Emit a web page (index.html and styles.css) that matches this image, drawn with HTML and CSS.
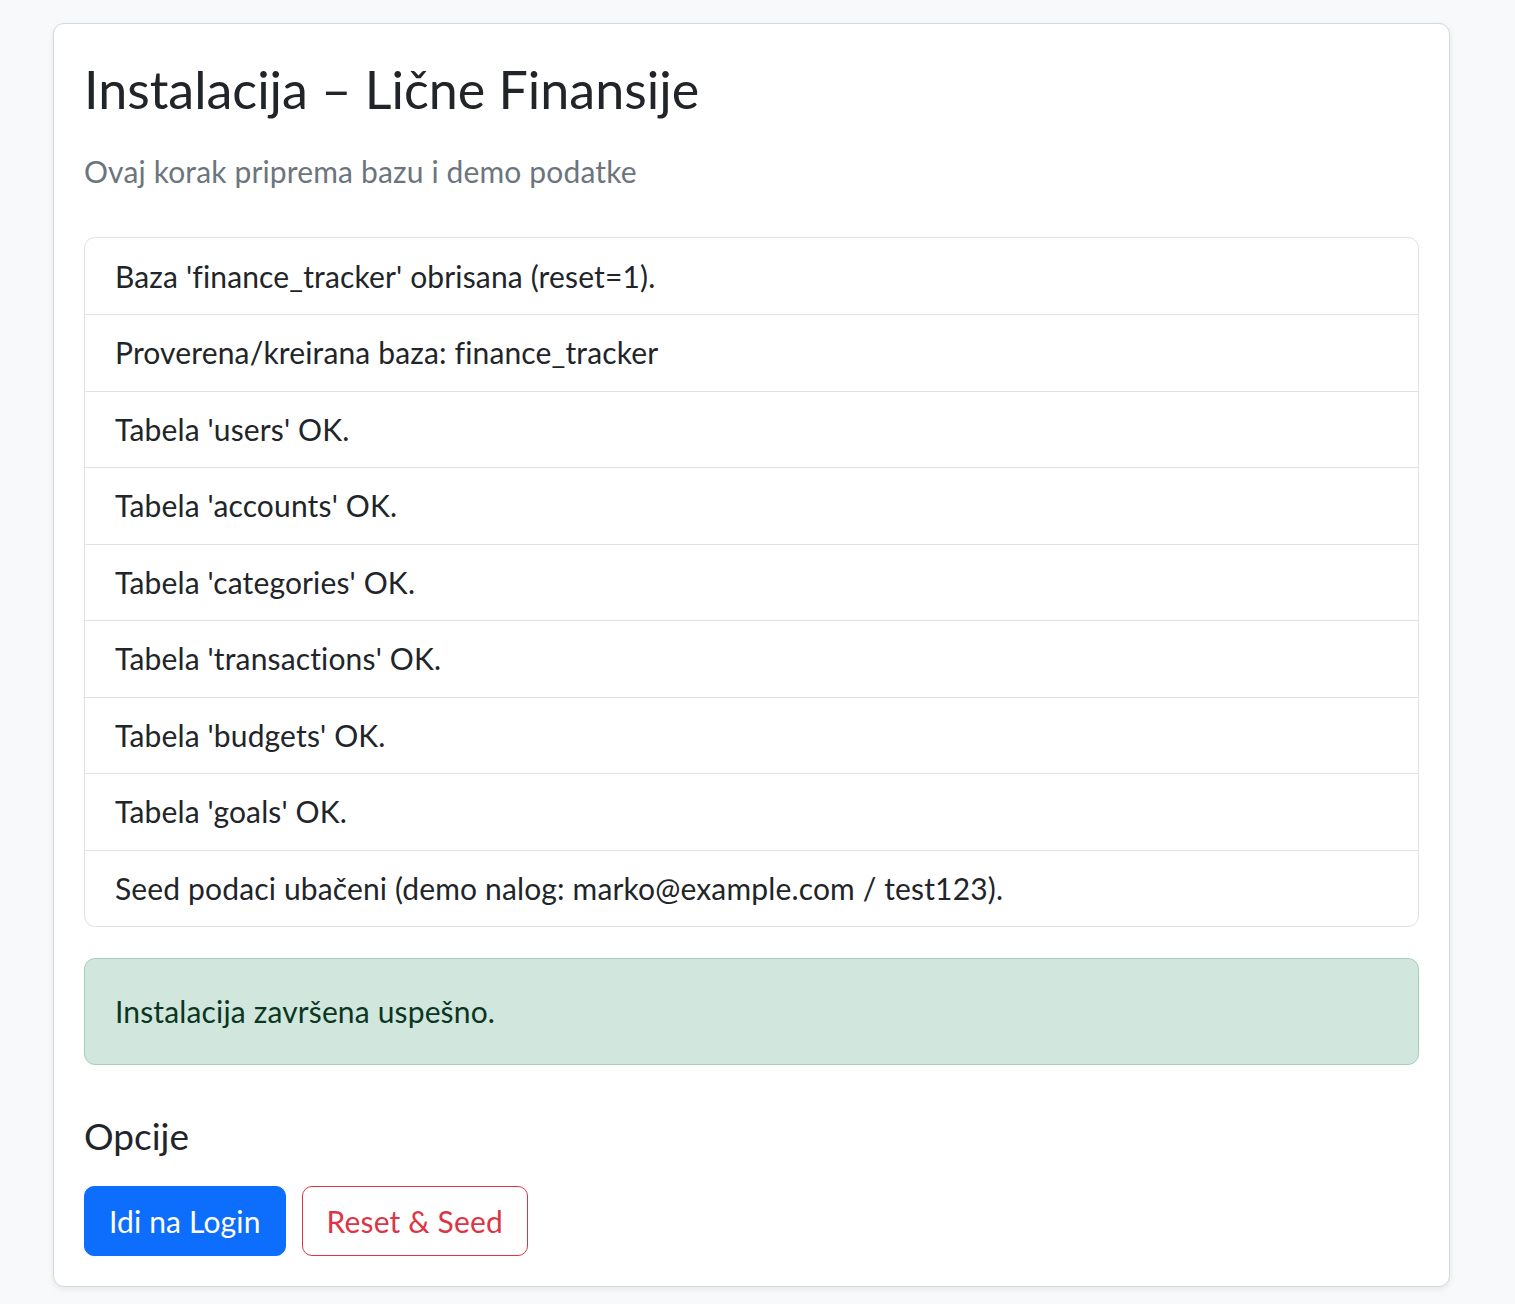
FILE: index.html
```html
<!DOCTYPE html>
<html lang="sr">
<head>
<meta charset="utf-8">
<title>Instalacija – Lične Finansije</title>
<link rel="stylesheet" href="styles.css">
</head>
<body>
<div class="page">
  <div class="card">
    <h1 class="title">Instalacija – Lične Finansije</h1>
    <p class="subtitle">Ovaj korak priprema bazu i demo podatke</p>
    <ul class="log">
      <li class="log-item">Baza 'finance_tracker' obrisana (reset=1).</li>
      <li class="log-item">Proverena/kreirana baza: finance_tracker</li>
      <li class="log-item">Tabela 'users' OK.</li>
      <li class="log-item">Tabela 'accounts' OK.</li>
      <li class="log-item">Tabela 'categories' OK.</li>
      <li class="log-item">Tabela 'transactions' OK.</li>
      <li class="log-item">Tabela 'budgets' OK.</li>
      <li class="log-item">Tabela 'goals' OK.</li>
      <li class="log-item">Seed podaci ubačeni (demo nalog: marko@example.com / test123).</li>
    </ul>
    <div class="alert-success">Instalacija završena uspešno.</div>
    <h5 class="section-title">Opcije</h5>
    <div class="actions">
      <a class="btn btn-primary" href="#">Idi na Login</a>
      <a class="btn btn-outline-danger" href="#">Reset &amp; Seed</a>
    </div>
  </div>
</div>
</body>
</html>
```
FILE: styles.css
```css
* { box-sizing: border-box; }
html, body { margin: 0; padding: 0; }
body {
  background: #f8f9fa;
  font-family: Lato, "Noto Sans", sans-serif;
  font-size: 30px;
  line-height: 45px;
  letter-spacing: 0.15px;
  color: #212529;
}
.page {
  padding: 23px 65px 17px 53px;
}
.card {
  background: #fff;
  border: 1px solid #d6d8da;
  border-radius: 11px;
  box-shadow: 0 2px 6px rgba(0,0,0,0.08);
  padding: 30px;
}
.title {
  margin: 0 0 25px 0;
  font-size: 52px;
  font-weight: 400;
  line-height: 70px;
  letter-spacing: 0;
}
.subtitle {
  margin: 0 0 43px 0;
  color: #6c757d;
}
.log {
  list-style: none;
  margin: 0 0 31px 0;
  padding: 0;
  border: 1px solid #dee2e6;
  border-radius: 11px;
  overflow: hidden;
}
.log-item {
  padding: 15px 30px 15.5px 30px;
  border-top: 1px solid #dee2e6;
}
.log-item:first-child { border-top: none; padding-top: 15.5px; }
.alert-success {
  background: #d1e7dd;
  border: 1px solid #a3cfbb;
  color: #0a3622;
  border-radius: 11px;
  padding: 30px;
  margin-bottom: 48px;
}
.section-title {
  margin: 0 0 27px 0;
  font-size: 37px;
  font-weight: 400;
  line-height: 46px;
  letter-spacing: 0;
}
.actions {
  display: flex;
  gap: 16px;
}
.btn {
  display: inline-block;
  text-decoration: none;
  border-radius: 10px;
  padding: 11.5px 24px;
  border: 1px solid transparent;
  line-height: 45px;
}
.btn-primary {
  background: #0d6efd;
  border-color: #0d6efd;
  color: #fff;
}
.btn-outline-danger {
  background: #fff;
  border-color: #dc3545;
  color: #dc3545;
}
```
